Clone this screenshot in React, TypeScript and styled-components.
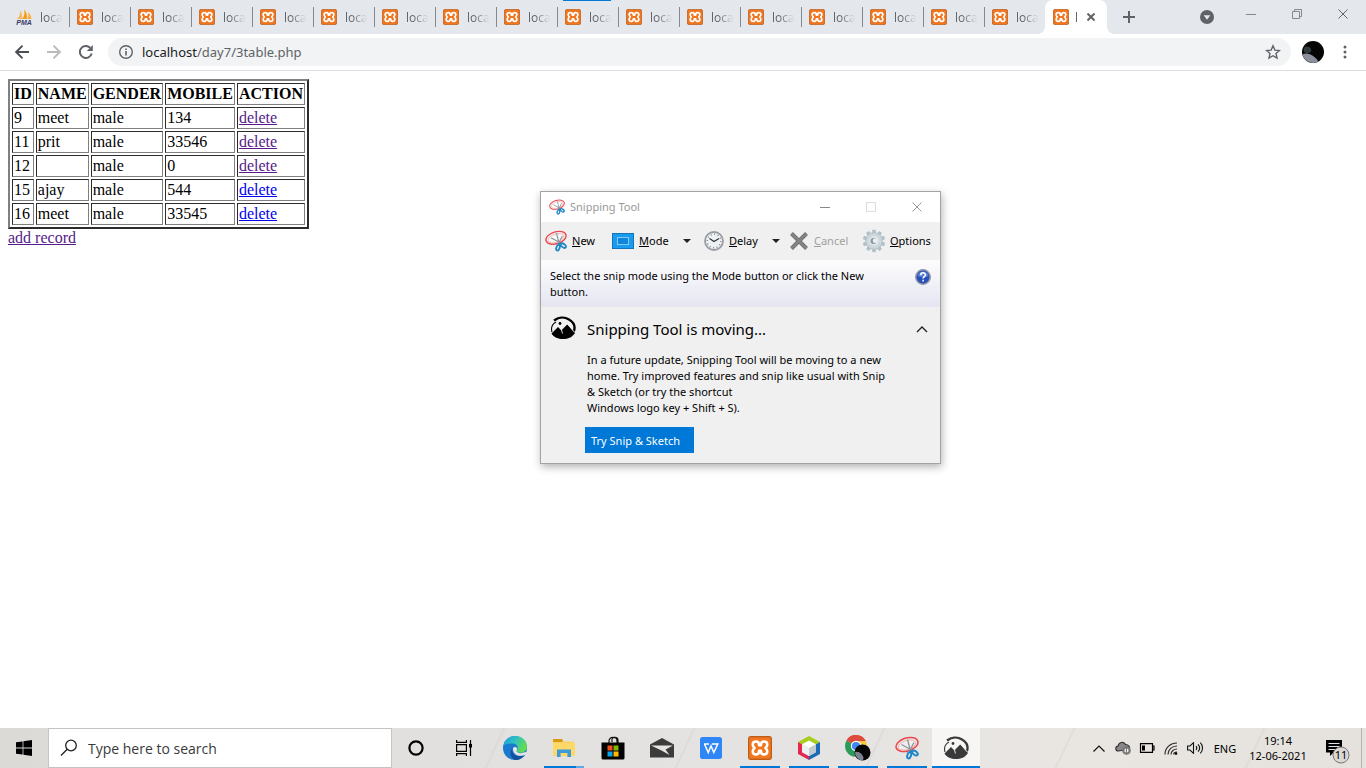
import React from "react";
import styled, { createGlobalStyle, css } from "styled-components";

const ui = `"Open Sans", "Noto Sans", sans-serif`;
const dialogFont = `"Noto Sans", "Open Sans", sans-serif`;

const GlobalStyle = createGlobalStyle`
  *, *::before, *::after { box-sizing: border-box; }
  body { margin: 0; background: #fff; }
  button { font-family: inherit; font-size: inherit; color: inherit; border: 0; padding: 0; background: none; }
  svg { display: block; flex: none; }
`;

/* ---------- browser frame ---------- */

const Screen = styled.div`
  min-height: 100vh;
  display: flex;
  flex-direction: column;
  font-family: ${ui};
  overflow: hidden;
`;

const TabStrip = styled.header`
  display: flex;
  height: 34px;
  padding-left: 8px;
  background: #e4e8ec;
  color: #5f6368;
`;

const TabList = styled.nav`
  display: flex;
`;

const Tab = styled.button<{ $active?: boolean; $last?: boolean }>`
  position: relative;
  display: flex;
  align-items: center;
  gap: 8px;
  width: 61px;
  height: 34px;
  padding-left: 8px;
  font-size: 12px;
  color: #5f6368;

  ${(p) =>
    !p.$active &&
    !p.$last &&
    css`
      &::after {
        content: "";
        position: absolute;
        right: -1px;
        top: 7px;
        width: 1px;
        height: 20px;
        background: #85898d;
      }
    `}

  ${(p) =>
    p.$active &&
    css`
      width: 62px;
      gap: 6px;
      background: #fff;
      border-radius: 8px 8px 0 0;
      &::before,
      &::after {
        content: "";
        position: absolute;
        bottom: 0;
        width: 8px;
        height: 8px;
      }
      &::before {
        left: -8px;
        background: radial-gradient(circle at 0 0, transparent 8px, #fff 8px);
      }
      &::after {
        right: -8px;
        background: radial-gradient(circle at 100% 0, transparent 8px, #fff 8px);
      }
    `}
`;

const TabTitle = styled.span<{ $width: number }>`
  width: ${(p) => p.$width}px;
  overflow: hidden;
  text-align: left;
  white-space: nowrap;
  mask-image: linear-gradient(90deg, #000 30%, transparent 98%);
`;

const LoadBar = styled.span`
  position: absolute;
  top: 0;
  left: 6px;
  width: 48px;
  height: 1px;
  background: #0078d7;
`;

const NewTab = styled.button`
  width: 28px;
  margin-left: 8px;
  display: grid;
  place-items: center;
`;

const StripEnd = styled.div`
  display: flex;
  margin-left: auto;
`;

const SearchTabs = styled.button`
  width: 42px;
  display: grid;
  place-items: center;
`;

const Caption = styled.button`
  width: 46px;
  height: 28px;
  display: grid;
  place-items: center;
`;

const NavBar = styled.div`
  display: flex;
  align-items: center;
  height: 37px;
  padding: 0 5px 0 6px;
  border-bottom: 1px solid #dadce0;
  background: #fff;
`;

const NavButton = styled.button`
  width: 32px;
  height: 32px;
  display: grid;
  place-items: center;
`;

const Omnibox = styled.form`
  flex: 1;
  display: flex;
  align-items: center;
  height: 28px;
  margin-left: 6px;
  padding: 0 10px;
  border-radius: 14px;
  background: #f1f3f4;
  font-family: ${dialogFont};
  font-size: 13px;
`;

const Host = styled.label`
  margin-left: 8px;
  color: #202124;
`;

const PathInput = styled.input`
  flex: 1;
  min-width: 0;
  padding: 0;
  border: 0;
  outline: 0;
  background: none;
  font: inherit;
  color: #5f6368;
`;

const ProfileButton = styled.button`
  width: 24px;
  margin-left: 10px;
  display: grid;
  place-items: center;
`;

const MenuButton = styled.button`
  width: 32px;
  margin-left: 4px;
  display: grid;
  place-items: center;
`;

/* ---------- web page ---------- */

const Page = styled.main`
  position: relative;
  flex: 1;
  padding: 8px;
  font-family: "Liberation Serif", serif;
  font-size: 16px;
  line-height: 18px;
  color: #000;
`;

const Records = styled.table`
  border: 2px outset #808080;
  border-spacing: 2px;

  th,
  td {
    padding: 1px;
    border: 1px inset #808080;
  }
  th {
    text-align: center;
  }
`;

const Link = styled.a<{ $visited?: boolean }>`
  color: ${(p) => (p.$visited ? "#551a8b" : "#0000ee")};
`;

/* ---------- snipping tool ---------- */

const Dialog = styled.section`
  position: absolute;
  top: 120px;
  left: 540px;
  width: 401px;
  border: 1px solid #a3a3a3;
  background: #f0f0f0;
  box-shadow: 1px 3px 8px rgba(0, 0, 0, 0.3);
  font-family: ${dialogFont};
  font-size: 11px;
  line-height: 16px;
`;

const TitleBar = styled.div`
  display: flex;
  align-items: center;
  height: 30px;
  padding-left: 8px;
  gap: 5px;
  background: #fff;
  color: #999;
`;

const TitleButtons = styled.div`
  display: flex;
  margin-left: auto;
`;

const TitleButton = styled.button`
  width: 46px;
  height: 28px;
  display: grid;
  place-items: center;
`;

const Tools = styled.div`
  display: grid;
  grid-template-columns: 67px 66px 26px 63px 22px 74px auto;
  align-items: center;
  height: 38px;
  padding: 0 0 1px 4px;
`;

const Tool = styled.button`
  display: flex;
  align-items: center;
  gap: 5px;
  color: #000;
  white-space: nowrap;
  &:disabled {
    color: #a0a0a0;
  }
`;

const DropArrow = styled.button`
  width: 18px;
  height: 24px;
  display: grid;
  place-items: center;
`;

const Hint = styled.div`
  display: flex;
  justify-content: space-between;
  height: 47px;
  padding: 8px 9px 0;
  background: linear-gradient(#fdfdfe, #e4e5f1);
`;

const HelpButton = styled.button`
  width: 16px;
  height: 18px;
`;

const Notice = styled.div`
  display: grid;
  grid-template-columns: 34px 1fr 20px;
  padding: 8px 8px 10px 9px;
`;

const NoticeTitle = styled.h2`
  margin: 0;
  padding-left: 3px;
  font-size: 15px;
  font-weight: 400;
  line-height: 28px;
`;

const Chevron = styled.button`
  display: grid;
  place-items: center;
`;

const NoticeBody = styled.div`
  grid-column: 2 / -1;
  padding-top: 9px;
`;

const NoticeText = styled.p`
  margin: 0 0 11px;
  padding-left: 3px;
`;

const TryButton = styled.button`
  height: 26px;
  width: 109px;
  margin-left: 1px;
  padding-left: 6px;
  background: #0078d7;
  color: #fff;
  text-align: left;
`;

/* ---------- taskbar ---------- */

const Taskbar = styled.footer`
  display: flex;
  height: 40px;
  color: #000;
  background:
    linear-gradient(115deg, transparent 49%, rgba(205, 202, 199, 0.35) 50%, transparent 51%) 400px 0 / 190px 40px repeat-x,
    linear-gradient(90deg, #dcdad7 0, #e2e0de 30%, #e6e4e2 60%, #e9e6e2 80%, #e5e2de 100%);
`;

const StartButton = styled.button`
  width: 48px;
  display: grid;
  place-items: center;
`;

const SearchBox = styled.label`
  display: flex;
  align-items: center;
  gap: 10px;
  width: 344px;
  padding-left: 11px;
  border: 1px solid #c4c4c4;
  background: #fff;
`;

const SearchInput = styled.input`
  flex: 1;
  min-width: 0;
  padding: 0;
  border: 0;
  outline: 0;
  background: none;
  font-family: ${ui};
  font-size: 14px;
  &::placeholder {
    color: #3a3a3a;
    opacity: 1;
  }
`;

const Apps = styled.nav`
  display: flex;
  gap: 1px;
  margin-left: 3px;
`;

const AppButton = styled.button<{ $running?: boolean; $active?: boolean; $stacked?: boolean }>`
  position: relative;
  width: 48px;
  display: grid;
  place-items: center;
  background: ${(p) => (p.$active ? "rgba(255, 255, 255, 0.65)" : "none")};

  &::after {
    content: "";
    position: absolute;
    bottom: 0;
    left: ${(p) => (p.$active ? 0 : 4)}px;
    right: ${(p) => (p.$active ? 0 : 4)}px;
    height: 2px;
    background: ${(p) =>
      p.$stacked
        ? "linear-gradient(90deg, #0078d7 80%, #5ea9e6 80%)"
        : p.$running || p.$active
        ? "#0078d7"
        : "transparent"};
  }
`;

const Tray = styled.div`
  display: flex;
  margin-left: auto;
  font-family: ${dialogFont};
  font-size: 11px;
  line-height: 18px;
`;

const TrayButton = styled.button<{ $width?: number }>`
  width: ${(p) => p.$width ?? 24}px;
  display: grid;
  place-items: center;
  align-content: center;
`;

const ShowDesktop = styled.button`
  width: 5px;
  border-left: 1px solid #b5b2af;
`;

/* ---------- drawings ---------- */

const Xampp = ({ size }: { size: number }) => (
  <svg width={size} height={size} viewBox="0 0 24 24">
    <rect x="0.6" y="0.6" width="22.8" height="22.8" rx="2.4" fill="#f0761f" stroke="#bd5c1a" strokeWidth="1.2" />
    <path
      d="M8 5.500c2 0 3 1.200 3 3v.8h2v-.8c0-1.800 1-3 3-3s3.300 1.400 3.300 3.200c0 1.400-.8 2.300-1.800 3.300 1 1 1.800 1.900 1.800 3.300 0 1.800-1.300 3.200-3.300 3.200s-3-1.200-3-3v-.8h-2v.8c0 1.800-1 3-3 3s-3.300-1.400-3.300-3.200c0-1.400.8-2.300 1.800-3.300-1-1-1.800-1.900-1.800-3.300C4.700 6.900 6 5.500 8 5.500z"
      fill="none"
      stroke="#fff"
      strokeWidth="2.500"
      strokeLinejoin="round"
    />
  </svg>
);

const PhpMyAdmin = () => (
  <svg width="16" height="16" viewBox="0 0 16 16">
    <path d="M1 10C3.500 8 4.500 5 4 1.500c2 2 2.500 5.500 1.800 8.500z" fill="#f7b55a" />
    <path d="M6 10C8.500 7.500 9 4 8 0.500c3 3 3.500 6.500 2.800 9.500z" fill="#f89c0e" />
    <path d="M11.200 10C12.500 8 12.800 5 12 3c2.500 2 3.200 4.500 3.500 7z" fill="#f7ad45" />
    <text x="8" y="16" textAnchor="middle" fontFamily="Liberation Sans, sans-serif" fontSize="7" fontWeight="700" fontStyle="italic" fill="#3c3c6c">
      PMA
    </text>
  </svg>
);

const SnipIcon = ({ size }: { size: number }) => (
  <svg width={size} height={size} viewBox="0 0 24 24">
    <ellipse cx="12" cy="8.500" rx="11.300" ry="6.500" transform="rotate(-17 12 8.500)" fill="#fff" fillOpacity="0.4" stroke="#e8474c" strokeWidth="1.500" />
    <ellipse cx="12" cy="9" rx="9" ry="4.600" transform="rotate(-17 12 9)" fill="none" stroke="#f3a3a3" strokeWidth="0.800" />
    <path d="M12.500 3.500l3 11.500M6.500 8.500l10 5.500M19 6.500l-4.500 8.500" stroke="#8d949b" strokeWidth="1.300" fill="none" />
    <g fill="none" stroke="#1c86c8" strokeWidth="2">
      <ellipse cx="14.200" cy="19.300" rx="1.800" ry="3.200" transform="rotate(18 14.200 19.300)" />
      <ellipse cx="20" cy="17" rx="3.200" ry="1.800" transform="rotate(38 20 17)" />
      <path d="M14.700 15.500l3-.5" />
    </g>
  </svg>
);

const SketchIcon = ({ size, color, halo }: { size: number; color: string; halo: string }) => (
  <svg width={size} height={size} viewBox="0 0 26 26">
    <path d="M4 5.500C8 2.500 14 1.500 19 4.500c5 3 6.500 7.500 4.800 12" fill="none" stroke={color} strokeWidth="2.300" />
    <path d="M6 7C2.500 9 .800 13 2 17" fill="none" stroke={color} strokeWidth="1.100" />
    <path d="M1.500 18.500l6.500-6.500 3.200 3.200 6-6L25 18C22 22.500 18 24 13 24S4 22.500 1.500 18.500z" fill={color} />
    <path d="M8.500 11.500l2.800 2.800 1.200 4.200M11.300 15l6-6.200 7 8.200" fill="none" stroke={halo} strokeWidth="0.900" />
    <circle cx="10" cy="8.500" r="1.400" fill={color} />
  </svg>
);

const CloseX = ({ size, width = 1 }: { size: number; width?: number }) => (
  <svg width={size} height={size} viewBox={`0 0 ${size} ${size}`} stroke="currentColor" strokeWidth={width}>
    <path d={`M0.500 0.500L${size - 0.5} ${size - 0.5}M${size - 0.5} 0.500L0.500 ${size - 0.5}`} />
  </svg>
);

const Avatar = ({ size }: { size: number }) => (
  <svg width={size} height={size} viewBox="0 0 22 22">
    <circle cx="11" cy="11" r="11" fill="#050505" />
    <path d="M0.500 13.500C4 11.500 9 13 13 16.500c2 1.700 3 3 3 4.300A11 11 0 0 1 .500 13.500z" fill="#8c8f9c" />
    <path d="M2 7c2-2.500 6-1.500 7 1s-1 4-4 4-4-2-3-5z" fill="#303c3c" />
  </svg>
);

const DownTriangle = () => (
  <svg width="8" height="4" viewBox="0 0 8 4">
    <path d="M0 0h8L4 4z" fill="#222" />
  </svg>
);

const gearTeeth = Array.from({ length: 10 }, (_, i) => i * 36);

/* ---------- data ---------- */

const records = [
  { id: "9", name: "meet", gender: "male", mobile: "134", visited: true },
  { id: "11", name: "prit", gender: "male", mobile: "33546", visited: true },
  { id: "12", name: "", gender: "male", mobile: "0", visited: true },
  { id: "15", name: "ajay", gender: "male", mobile: "544", visited: false },
  { id: "16", name: "meet", gender: "male", mobile: "33545", visited: false },
];

const backgroundTabs = Array.from({ length: 17 }, (_, i) => i);

/* ---------- sections ---------- */

const Browser = () => (
  <>
    <TabStrip>
      <TabList>
        {backgroundTabs.map((i) => (
          <Tab key={i} $last={i === 16}>
            {i === 0 ? <PhpMyAdmin /> : <Xampp size={16} />}
            <TabTitle $width={23}>loca</TabTitle>
            {i === 9 && <LoadBar />}
          </Tab>
        ))}
        <Tab $active>
          <Xampp size={16} />
          <TabTitle $width={6}>l</TabTitle>
          <CloseX size={8} width={2} />
        </Tab>
      </TabList>
      <NewTab aria-label="New tab">
        <svg width="12" height="12" viewBox="0 0 12 12">
          <path d="M6 0v12M0 6h12" stroke="#5f6368" strokeWidth="2" />
        </svg>
      </NewTab>
      <StripEnd>
        <SearchTabs aria-label="Search tabs">
          <svg width="14" height="14" viewBox="0 0 14 14">
            <circle cx="7" cy="7" r="7" fill="#5f6368" />
            <path d="M3.700 5.200h6.600L7 9.700z" fill="#e4e8ec" />
          </svg>
        </SearchTabs>
        <Caption aria-label="Minimize">
          <svg width="10" height="10" viewBox="0 0 10 10">
            <path d="M0 5.500h10" stroke="#888" />
          </svg>
        </Caption>
        <Caption aria-label="Restore">
          <svg width="10" height="10" viewBox="0 0 10 10" fill="none" stroke="#888">
            <path d="M0.500 2.500h7v7h-7zM2.500 2.500v-2h7v7h-2" />
          </svg>
        </Caption>
        <Caption aria-label="Close">
          <CloseX size={10} />
        </Caption>
      </StripEnd>
    </TabStrip>
    <NavBar>
      <NavButton aria-label="Back">
        <svg width="14" height="14" viewBox="0 0 14 14" fill="none" stroke="#4b4f54" strokeWidth="1.900">
          <path d="M14 7H1.500M7.500 0.700L1.200 7l6.300 6.300" />
        </svg>
      </NavButton>
      <NavButton aria-label="Forward">
        <svg width="14" height="14" viewBox="0 0 14 14" fill="none" stroke="#babcbe" strokeWidth="1.900">
          <path d="M0 7h12.500M6.500 0.700L12.800 7l-6.300 6.300" />
        </svg>
      </NavButton>
      <NavButton aria-label="Reload">
        <svg width="14" height="14" viewBox="0 0 14 14">
          <path d="M12.700 8.500A6 6 0 1 1 11.200 2.800" fill="none" stroke="#5f6368" strokeWidth="2" />
          <path d="M13.800 0v6H7.800z" fill="#5f6368" />
        </svg>
      </NavButton>
      <Omnibox>
        <svg width="16" height="16" viewBox="0 0 16 16">
          <circle cx="8" cy="8" r="6.300" fill="none" stroke="#5f6368" strokeWidth="1.400" />
          <path d="M8 7v4.500M8 4.500v1.600" stroke="#5f6368" strokeWidth="1.600" />
        </svg>
        <Host htmlFor="address">localhost</Host>
        <PathInput id="address" defaultValue="/day7/3table.php" />
        <svg width="16" height="16" viewBox="0 0 16 16">
          <path
            d="M8 1.800l1.850 4.300 4.650.4-3.500 3.100 1.050 4.550L8 11.700l-4.050 2.450L5 9.600 1.500 6.500l4.650-.4z"
            fill="none"
            stroke="#5f6368"
            strokeWidth="1.400"
          />
        </svg>
      </Omnibox>
      <ProfileButton aria-label="Profile">
        <Avatar size={22} />
      </ProfileButton>
      <MenuButton aria-label="Menu">
        <svg width="4" height="14" viewBox="0 0 4 14" fill="#5f6368">
          <circle cx="2" cy="2" r="1.500" />
          <circle cx="2" cy="7" r="1.500" />
          <circle cx="2" cy="12" r="1.500" />
        </svg>
      </MenuButton>
    </NavBar>
  </>
);

const SnippingTool = () => (
  <Dialog aria-label="Snipping Tool">
    <TitleBar>
      <SnipIcon size={16} />
      <span>Snipping Tool</span>
      <TitleButtons>
        <TitleButton aria-label="Minimize">
          <svg width="10" height="10" viewBox="0 0 10 10">
            <path d="M0 5.500h10" stroke="#888" />
          </svg>
        </TitleButton>
        <TitleButton aria-label="Maximize" disabled>
          <svg width="10" height="10" viewBox="0 0 10 10">
            <path d="M0.500 0.500h9v9h-9z" stroke="#ddd" fill="none" />
          </svg>
        </TitleButton>
        <TitleButton aria-label="Close">
          <CloseX size={10} />
        </TitleButton>
      </TitleButtons>
    </TitleBar>
    <Tools>
      <Tool>
        <SnipIcon size={22} />
        <span><u>N</u>ew</span>
      </Tool>
      <Tool>
        <svg width="22" height="16" viewBox="0 0 22 16">
          <rect x="0.500" y="0.500" width="21" height="15" fill="#189cf2" stroke="#1673b8" />
          <rect x="5.500" y="4.500" width="11" height="7" fill="#0f86dd" stroke="#fff" strokeDasharray="1 1" />
        </svg>
        <span><u>M</u>ode</span>
      </Tool>
      <DropArrow aria-label="Mode options"><DownTriangle /></DropArrow>
      <Tool>
        <svg width="20" height="20" viewBox="0 0 20 20">
          <circle cx="10" cy="10" r="9" fill="#eef1f3" stroke="#9a9ea2" strokeWidth="1.800" />
          <circle cx="10" cy="10" r="6.800" fill="none" stroke="#777c82" strokeWidth="1.400" strokeDasharray="0.900 2.660" />
          <path d="M5.500 7.500l4.500 3 5-3" fill="none" stroke="#333" strokeWidth="1.200" />
        </svg>
        <span><u>D</u>elay</span>
      </Tool>
      <DropArrow aria-label="Delay options"><DownTriangle /></DropArrow>
      <Tool disabled>
        <svg width="20" height="20" viewBox="0 0 20 20">
          <path d="M2.500 2.500l15 15M17.500 2.500l-15 15" stroke="#6e6e6e" strokeWidth="4" />
          <path d="M2.500 2.500l15 15M17.500 2.500l-15 15" stroke="#858585" strokeWidth="2.400" />
        </svg>
        <span><u>C</u>ancel</span>
      </Tool>
      <Tool>
        <svg width="22" height="24" viewBox="0 0 22 24">
          {gearTeeth.map((a) => (
            <rect key={a} x="9.200" y="0.800" width="3.600" height="5" rx="0.800" fill="#b3c0c8" transform={`rotate(${a} 11 12)`} />
          ))}
          <circle cx="11" cy="12" r="8.400" fill="#cbd6dd" stroke="#a9b5bd" strokeWidth="0.700" />
          <circle cx="11" cy="12" r="5" fill="#dfe7eb" />
          <circle cx="10.500" cy="12" r="3" fill="#8b969e" />
          <circle cx="12" cy="11.700" r="2.300" fill="#eef1f3" />
        </svg>
        <span><u>O</u>ptions</span>
      </Tool>
    </Tools>
    <Hint>
      <span>
        Select the snip mode using the Mode button or click the New
        <br />
        button.
      </span>
      <HelpButton aria-label="Help">
        <svg width="16" height="18" viewBox="0 0 16 18">
          <circle cx="8" cy="9" r="7.200" fill="#2950b8" stroke="#8d93a3" strokeWidth="1.500" />
          <path d="M2.500 8a5.600 5.600 0 0 1 11 0c-3 1.500-8 1.500-11 0z" fill="#5b7ed6" />
          <path d="M5.700 7.200c0-3.200 4.700-3 4.700-.3C10.400 8.600 8.100 8.600 8.100 10.500M8.100 11.800v1.700" fill="none" stroke="#fff" strokeWidth="1.500" />
        </svg>
      </HelpButton>
    </Hint>
    <Notice>
      <SketchIcon size={26} color="#000" halo="#f0f0f0" />
      <NoticeTitle>Snipping Tool is moving...</NoticeTitle>
      <Chevron aria-label="Collapse">
        <svg width="12" height="7" viewBox="0 0 12 7">
          <path d="M1 6l5-5 5 5" fill="none" stroke="#222" strokeWidth="1.400" />
        </svg>
      </Chevron>
      <NoticeBody>
        <NoticeText>
          In a future update, Snipping Tool will be moving to a new
          <br />
          home. Try improved features and snip like usual with Snip
          <br />
          &amp; Sketch (or try the shortcut
          <br />
          Windows logo key + Shift + S).
        </NoticeText>
        <TryButton>Try Snip &amp; Sketch</TryButton>
      </NoticeBody>
    </Notice>
  </Dialog>
);

const DesktopTaskbar = () => (
  <Taskbar>
    <StartButton aria-label="Start">
      <svg width="16" height="16" viewBox="0 0 16 16">
        <path d="M0 2.300L6.600 1.400V7.600H0zM7.400 1.300L16 0v7.600H7.400zM0 8.400h6.600v6.200L0 13.700zM7.400 8.400H16V16l-8.600-1.300z" />
      </svg>
    </StartButton>
    <SearchBox>
      <svg width="18" height="18" viewBox="0 0 18 18" fill="none" stroke="#222" strokeWidth="1.300">
        <circle cx="11" cy="6.500" r="5.300" />
        <path d="M7.200 10.300L1 16.500" />
      </svg>
      <SearchInput placeholder="Type here to search" />
    </SearchBox>
    <StartButton aria-label="Cortana">
      <svg width="16" height="16" viewBox="0 0 16 16">
        <circle cx="8" cy="8" r="6.600" fill="none" stroke="#000" strokeWidth="2.200" />
      </svg>
    </StartButton>
    <StartButton aria-label="Task view">
      <svg width="16" height="16" viewBox="0 0 16 16" fill="none" stroke="#000" strokeWidth="1.200">
        <path d="M0.600 0v2.400h9.800V0M0.600 16v-2.400h9.800V16M0.600 4.600h9.800v6.800H0.600zM14.500 0v16" />
        <path d="M13 4h3v3.500h-3z" fill="#000" stroke="none" />
      </svg>
    </StartButton>
    <Apps>
      <AppButton aria-label="Edge">
        <svg width="24" height="24" viewBox="0 0 24 24">
          <defs>
            <linearGradient id="edgeTop" x1="0" y1="0" x2="1" y2="0.400">
              <stop offset="0" stopColor="#1c9fdc" />
              <stop offset="0.500" stopColor="#2cc0c4" />
              <stop offset="1" stopColor="#62dc52" />
            </linearGradient>
          </defs>
          <circle cx="12" cy="12" r="12" fill="#1a7ad0" />
          <path d="M.300 10C1.500 4 6.500 0 12.200 0 19 0 24 5 24 10.500c0 4-3 6.300-6.500 6.300-2.500 0-4-1-3.400-2.200 2-3.600-.6-7.100-4.600-7.100C5 7.500 1 8.700.300 10z" fill="url(#edgeTop)" />
          <path d="M9.200 12.500c-1 5.500 4 9 9.300 7.500 1.500-.4 2.800-1.200 3.700-1.600-1.900 3.500-5.700 5.600-10.200 5.600C7.500 22 6 16 9.200 12.500z" fill="#15519c" />
          <path d="M10 12.500c.5-2.300 4.200-2 4.200.5 0 1-.8 1.400-.6 2.300.5 1.700 4 2.500 7 1.300 1.300-.5 2.200-1 2.700-.5.500.6-.3 1.800-1.100 2.600-3.800 2.400-12.700 1.300-12.200-6.200z" fill="#e6e5e4" />
        </svg>
      </AppButton>
      <AppButton aria-label="File Explorer" $stacked>
        <svg width="22" height="20" viewBox="0 0 22 20">
          <path d="M0 1h9l1.500 2.500H21V18H0z" fill="#fbd25f" />
          <path d="M0 1h9l1 2-1 1H0z" fill="#d69b12" />
          <path d="M0 5h22v12.500H0z" fill="#ffd968" />
          <path d="M4 19v-7.500h14V19h-3.600v-4H7.600v4z" fill="#3e98dc" />
        </svg>
      </AppButton>
      <AppButton aria-label="Store">
        <svg width="24" height="24" viewBox="0 0 24 24">
          <path d="M8 7V5c0-5 8-5 8 0v2M11 6V3.500c0-3 6-3 6 .5v3" fill="none" stroke="#111" strokeWidth="1.200" />
          <path d="M0.500 6.500h23V22a1.500 1.500 0 0 1-1.500 1.500H2A1.500 1.500 0 0 1 .500 22z" fill="#000" />
          <path d="M6.500 9.500h5v5h-5z" fill="#f25022" />
          <path d="M12.500 9.500h5v5h-5z" fill="#7fba00" />
          <path d="M6.500 15.500h5v5h-5z" fill="#00a4ef" />
          <path d="M12.500 15.500h5v5h-5z" fill="#ffb900" />
        </svg>
      </AppButton>
      <AppButton aria-label="Mail">
        <svg width="24" height="20" viewBox="0 0 24 20">
          <path d="M0 6.500L12 0l12 6.500V19.500H0z" fill="#3b3b3b" />
          <path d="M1 7.500H23L15.500 11.500l4 5.500L11.500 12.500z" fill="#e6e4e2" />
        </svg>
      </AppButton>
      <AppButton aria-label="WPS Writer">
        <svg width="22" height="22" viewBox="0 0 22 22">
          <rect width="22" height="22" rx="2.500" fill="#2f86f6" />
          <path d="M4 7h5M4.500 7l3.700 8.500L11 9l2.800 6.500L17.800 7h-6" fill="none" stroke="#fff" strokeWidth="1.500" />
        </svg>
      </AppButton>
      <AppButton aria-label="XAMPP" $running>
        <Xampp size={24} />
      </AppButton>
      <AppButton aria-label="NetBeans" $running>
        <svg width="22" height="24" viewBox="0 0 22 24">
          <path d="M11 0l11 6-11 6.500L0 6z" fill="#a7ce1c" />
          <path d="M0 6l4 2.200v8L11 20v4L0 18z" fill="#e22850" />
          <path d="M22 6l-4 2.200v8L11 20v4l11-6z" fill="#1b6ab5" />
          <path d="M11 4.500l7 3.800-7 4-7-4z" fill="#fff" />
          <path d="M4 8.300l7 4V20l-7-4z" fill="#edf1f2" />
          <path d="M18 8.300l-7 4V20l7-4z" fill="#c3cbd0" />
        </svg>
      </AppButton>
      <AppButton aria-label="Chrome" $running>
        <svg width="26" height="26" viewBox="0 0 26 26">
          <path d="M11 11L1.500 5.500A11 11 0 0 1 20.600 5.700z" fill="#dd4b3e" />
          <path d="M11 11L1.500 5.500A11 11 0 0 0 10.500 22z" fill="#2a9b58" />
          <path d="M11 6h9.800A11 11 0 0 1 10.500 22L15.500 13z" fill="#fbca3e" />
          <path d="M1.500 5.500A11 11 0 0 1 20.800 6H11z" fill="#dd4b3e" />
          <circle cx="11" cy="11" r="5.200" fill="#fff" />
          <circle cx="11" cy="11" r="4.100" fill="#4285f4" />
          <circle cx="17.500" cy="17.500" r="8" fill="#060606" />
          <path d="M10 17c3-1 7 1 8.500 5.500l-.5 3A8 8 0 0 1 10 17z" fill="#7d8290" />
        </svg>
      </AppButton>
      <AppButton aria-label="Snipping Tool" $running>
        <SnipIcon size={24} />
      </AppButton>
      <AppButton aria-label="Snip and Sketch" $active>
        <SketchIcon size={26} color="#3a3a3a" halo="#f4f4f4" />
      </AppButton>
    </Apps>
    <Tray>
      <TrayButton aria-label="Show hidden icons">
        <svg width="12" height="7" viewBox="0 0 12 7">
          <path d="M0.500 6.500L6 1l5.500 5.500" fill="none" stroke="#111" strokeWidth="1.200" />
        </svg>
      </TrayButton>
      <TrayButton aria-label="OneDrive">
        <svg width="16" height="14" viewBox="0 0 16 14">
          <path d="M3.500 10C0 10 0 5.500 3 5.200 3.500 1 9 0 10.500 3.500c3 0 4.500 2 4 4.500z" fill="#8a8886" stroke="#333" strokeWidth="1.200" />
          <circle cx="11.500" cy="9.500" r="4.300" fill="#777" />
          <path d="M10.300 7.700v3.600M12.700 7.700v3.600" stroke="#fff" strokeWidth="1.200" />
        </svg>
      </TrayButton>
      <TrayButton aria-label="Battery">
        <svg width="16" height="10" viewBox="0 0 16 10">
          <path d="M1.500 0.700h12v8.600h-12zM13.500 3h1.500v4h-1.500" fill="none" stroke="#000" strokeWidth="1.200" />
          <path d="M3 2.500h3v5H3z" />
        </svg>
      </TrayButton>
      <TrayButton aria-label="Wi-Fi">
        <svg width="14" height="14" viewBox="0 0 14 14" fill="none" stroke="#333" strokeWidth="1.200">
          <path d="M1 13.500C1 6.500 6.500 2 13 2M4 13.500c0-5 4-8.500 9-8.500M7 13.500c0-3.500 3-5.500 6-5.500M9.700 13.500c0-1.500 1.500-2.500 3.300-2.500" />
          <circle cx="12" cy="12.600" r="1.300" fill="#000" stroke="none" />
        </svg>
      </TrayButton>
      <TrayButton aria-label="Volume">
        <svg width="17" height="12" viewBox="0 0 17 12" fill="none" stroke="#111" strokeWidth="1.100">
          <path d="M0.600 4v4h2.400l3.500 3.300V.700L3 4z" />
          <path d="M9 4c1 1.200 1 2.800 0 4M11 2.300c2 2.200 2 5.200 0 7.400M13.300.700c3 3 3 7.600 0 10.600" />
        </svg>
      </TrayButton>
      <TrayButton $width={36}>ENG</TrayButton>
      <TrayButton $width={70}>
        <span>19:14</span>
        <span>12-06-2021</span>
      </TrayButton>
      <TrayButton $width={48} aria-label="Notifications">
        <svg width="26" height="32" viewBox="0 0 26 32">
          <path d="M2 8h16v12.500h-8.500L6 24V20.500H2z" fill="#000" />
          <path d="M4.500 11.500h11M4.500 14.500h11M4.500 17.500h7" stroke="#e5e2de" />
          <circle cx="17" cy="23" r="8" fill="#dad7d4" stroke="#777" />
          <text x="17" y="27" textAnchor="middle" fontFamily="Noto Sans, sans-serif" fontSize="11" fill="#000">
            11
          </text>
        </svg>
      </TrayButton>
      <ShowDesktop aria-label="Show desktop" />
    </Tray>
  </Taskbar>
);

export default function App() {
  return (
    <Screen>
      <GlobalStyle />
      <Browser />
      <Page>
        <Records>
          <thead>
            <tr>
              <th>ID</th>
              <th>NAME</th>
              <th>GENDER</th>
              <th>MOBILE</th>
              <th>ACTION</th>
            </tr>
          </thead>
          <tbody>
            {records.map((r) => (
              <tr key={r.id}>
                <td>{r.id}</td>
                <td>{r.name}</td>
                <td>{r.gender}</td>
                <td>{r.mobile}</td>
                <td>
                  <Link href="#delete" $visited={r.visited}>delete</Link>
                </td>
              </tr>
            ))}
          </tbody>
        </Records>
        <Link href="#add" $visited>add record</Link>
        <SnippingTool />
      </Page>
      <DesktopTaskbar />
    </Screen>
  );
}
